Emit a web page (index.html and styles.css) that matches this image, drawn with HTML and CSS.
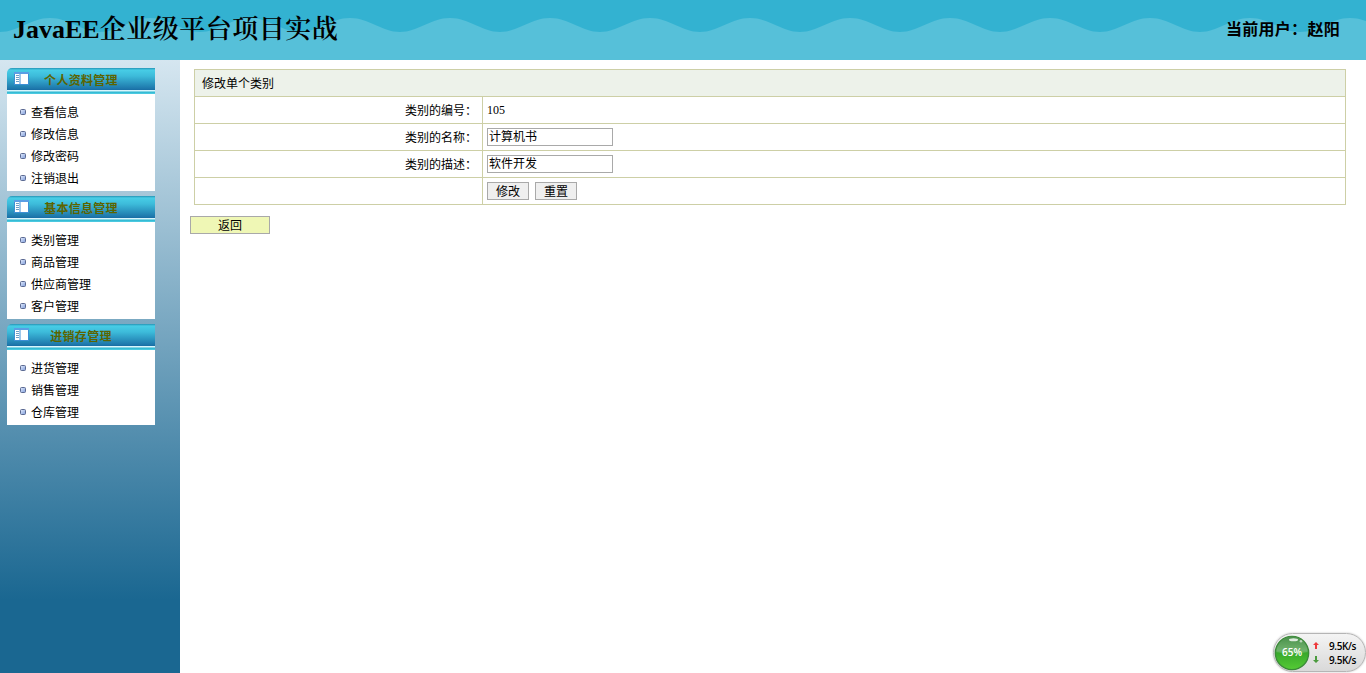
FILE: index.html
```html
<!DOCTYPE html>
<html lang="zh-CN">
<head>
<meta charset="utf-8">
<title>JavaEE企业级平台项目实战</title>
<link rel="stylesheet" href="styles.css">
</head>
<body>
<svg class="defs" width="0" height="0">
  <defs>
    <linearGradient id="bulletFill" x1="0" y1="0" x2="1" y2="1"><stop offset="0" stop-color="#e4ecfc"/><stop offset="1" stop-color="#7f9ddb"/></linearGradient>
    <symbol id="bullet" viewBox="0 0 6 6"><rect x=".5" y=".5" width="5" height="5" rx="1" fill="url(#bulletFill)" stroke="#5c6a92"/></symbol>
    <symbol id="panel" viewBox="0 0 15 13">
      <rect x="0" y="0" width="15" height="13" fill="#3d8fd4"/>
      <rect x="0" y="0" width="15" height="2" fill="#5a9ee4"/>
      <rect x="1" y="2" width="4.500" height="10" fill="#fff"/>
      <rect x="6.500" y="2" width="7.500" height="10" fill="#fff"/>
      <path d="M2 3.500h3M2 5.500h3M2 7.500h3M2 9.500h3" stroke="#6f9dc4" fill="none"/>
    </symbol>
  </defs>
</svg>
<header class="header">
  <svg class="wave" width="1366" height="60">
    <defs><pattern id="waves" width="100" height="60" patternUnits="userSpaceOnUse"><path d="M0 32C18 32 31 18 50 18S82 32 100 32V60H0Z" fill="#56c0d9"/></pattern></defs>
    <rect width="1366" height="60" fill="url(#waves)"/>
  </svg>
  <h1 class="title">JavaEE<span class="title-cn">企业级平台项目实战</span></h1>
  <div class="user">当前用户：赵阳</div>
</header>
<div class="body">
  <nav class="sidebar">
    <section class="group">
      <h2 class="group-title"><svg class="group-icon"><use href="#panel"/></svg><span>个人资料管理</span></h2>
      <ul class="menu">
        <li><svg class="dot"><use href="#bullet"/></svg><span>查看信息</span></li>
        <li><svg class="dot"><use href="#bullet"/></svg><span>修改信息</span></li>
        <li><svg class="dot"><use href="#bullet"/></svg><span>修改密码</span></li>
        <li><svg class="dot"><use href="#bullet"/></svg><span>注销退出</span></li>
      </ul>
    </section>
    <section class="group">
      <h2 class="group-title"><svg class="group-icon"><use href="#panel"/></svg><span>基本信息管理</span></h2>
      <ul class="menu">
        <li><svg class="dot"><use href="#bullet"/></svg><span>类别管理</span></li>
        <li><svg class="dot"><use href="#bullet"/></svg><span>商品管理</span></li>
        <li><svg class="dot"><use href="#bullet"/></svg><span>供应商管理</span></li>
        <li><svg class="dot"><use href="#bullet"/></svg><span>客户管理</span></li>
      </ul>
    </section>
    <section class="group">
      <h2 class="group-title"><svg class="group-icon"><use href="#panel"/></svg><span>进销存管理</span></h2>
      <ul class="menu">
        <li><svg class="dot"><use href="#bullet"/></svg><span>进货管理</span></li>
        <li><svg class="dot"><use href="#bullet"/></svg><span>销售管理</span></li>
        <li><svg class="dot"><use href="#bullet"/></svg><span>仓库管理</span></li>
      </ul>
    </section>
  </nav>
  <main class="content">
    <form>
      <div class="form-table">
        <div class="caption">修改单个类别</div>
        <div class="row"><div class="label">类别的编号：</div><div class="value">105</div></div>
        <div class="row"><div class="label">类别的名称：</div><div class="value"><input class="field" type="text" value="计算机书"></div></div>
        <div class="row"><div class="label">类别的描述：</div><div class="value"><input class="field" type="text" value="软件开发"></div></div>
        <div class="row"><div class="label"></div><div class="value"><button class="btn" type="button">修改</button><button class="btn" type="reset">重置</button></div></div>
      </div>
      <button class="back" type="button">返回</button>
    </form>
  </main>
</div>
<aside class="meter">
  <svg class="ball" width="36" height="36" viewBox="0 0 36 36">
    <defs>
      <linearGradient id="ballFill" x1="0" y1="0" x2="0" y2="1"><stop offset="0" stop-color="#2e8030"/><stop offset=".42" stop-color="#5ba757"/><stop offset=".5" stop-color="#38a92b"/><stop offset="1" stop-color="#55cb35"/></linearGradient>
    </defs>
    <circle cx="18" cy="18" r="16.700" fill="url(#ballFill)" stroke="#3b8a39" stroke-width="1.300"/>
    <path d="M2.500 17A15.500 15.500 0 0 1 33.500 17Q18 21 2.500 17Z" fill="#fff" opacity=".13"/>
    <ellipse cx="19.500" cy="4.700" rx="4.500" ry="1.500" fill="#fff" opacity=".8"/>
    <circle cx="27" cy="6.300" r="1.300" fill="#fff" opacity=".6"/>
  </svg>
  <span class="percent">65%</span>
  <div class="rates">
    <div class="rate"><svg width="6" height="7" viewBox="0 0 6 7"><path d="M3 0L6 3H4V7H2V3H0Z" fill="#ee3a3c"/></svg>9.5K/s</div>
    <div class="rate"><svg width="6" height="7" viewBox="0 0 6 7"><path d="M3 7L6 4H4V0H2V4H0Z" fill="#4b9b3e"/></svg>9.5K/s</div>
  </div>
</aside>
</body>
</html>
```
FILE: styles.css
```css
* { box-sizing: border-box; }
body {
  margin: 0;
  height: 673px;
  overflow: hidden;
  display: flex;
  flex-direction: column;
  background: #fff;
  color: #000;
  font: 12px/16px "Liberation Serif", "Noto Sans CJK SC", serif;
}
.defs { position: absolute; }
.header {
  position: relative;
  flex: none;
  height: 60px;
  padding: 0 26px 0 13px;
  display: flex;
  justify-content: space-between;
  align-items: center;
  background: #33b2d1;
}
.wave { position: absolute; left: 0; top: 0; }
.title {
  position: relative;
  margin: 0;
  padding-bottom: 4px;
  font-size: 26px;
  line-height: 56px;
  white-space: nowrap;
}
.title-cn {
  font-family: "Noto Serif CJK SC", "Noto Sans CJK SC", serif;
  font-weight: 600;
  letter-spacing: 0.5px;
}
.user {
  position: relative;
  font-size: 16px;
  line-height: 60px;
  font-weight: bold;
  letter-spacing: 0.3px;
}
.body { flex: 1; display: flex; }
.sidebar {
  width: 180px;
  padding: 8px 25px 0 7px;
  display: flex;
  flex-direction: column;
  gap: 5px;
  background: linear-gradient(#d5e6f0, #1a6791 540px);
}
.group-title {
  margin: 0;
  height: 26px;
  padding-left: 7px;
  display: flex;
  border-radius: 5px 0 0 0;
  background: linear-gradient(#2593b4 0, #47cde6 2px, #3dbbda 8px, #1c75aa 21px, #176ba3 22px, #d8f5fc 22px, #d8f5fc 23px, #2bb5cf 24px, #55cfe4 26px);
  color: #5c6400;
  font-size: 12px;
  line-height: 26px;
}
.group-title span { flex: 1; padding-right: 22px; text-align: center; letter-spacing: 0.3px; }
.group-icon { width: 15px; height: 13px; margin-top: 4px; }
.menu { margin: 0; padding: 7px 0 2px 13px; list-style: none; background: #fff; }
.menu li {
  height: 22px;
  display: flex;
  align-items: center;
  gap: 5px;
  line-height: 22px;
}
.menu span { padding-top: 2px; }
.dot { width: 6px; height: 6px; }
.content { flex: 1; padding: 9px 20px 0 10px; }
.form-table { margin-left: 4px; border: 1px solid #cdcfa6; }
.caption { height: 26px; padding-left: 7px; line-height: 28px; background: #edf2ea; }
.row { height: 27px; display: flex; border-top: 1px solid #cdcfa6; }
.label {
  width: 288px;
  padding-right: 5px;
  border-right: 1px solid #cdcfa6;
  line-height: 28px;
  text-align: right;
}
.value { flex: 1; padding-left: 4px; display: flex; align-items: center; gap: 6px; }
.field {
  width: 126px;
  height: 18px;
  padding: 0 1px 2px;
  border: 1px solid #a9a9a9;
  background: #fff;
  font: 12px/14px "Liberation Serif", "Noto Sans CJK SC", serif;
}
.btn, .back {
  padding: 1px 0 0;
  border: 1px solid #a9a9a9;
  font: 12px/16px "Liberation Serif", "Noto Sans CJK SC", serif;
  color: #000;
}
.btn { width: 42px; height: 18px; background: #efefef; }
.back { display: block; width: 80px; height: 18px; margin-top: 11px; background: #eff7b5; }
.meter {
  position: absolute;
  left: 1273px;
  top: 633px;
  width: 93px;
  height: 39px;
  display: flex;
  align-items: center;
  gap: 3px;
  border: 1px solid #b5b5b5;
  border-radius: 20px;
  background: linear-gradient(#f4f4f4, #d9d9d9);
  box-shadow: 0 0 2px #bbb;
}
.percent {
  position: absolute;
  left: 0;
  top: 10px;
  width: 36px;
  text-align: center;
  color: #fff;
  font: 10px/16px "Open Sans", sans-serif;
  font-weight: 600;
}
.ball { flex: none; }
.rate {
  display: flex;
  align-items: center;
  gap: 10px;
  font: 10px/14px "Open Sans", sans-serif;
  font-weight: 600;
  letter-spacing: -0.4px;
}
```
